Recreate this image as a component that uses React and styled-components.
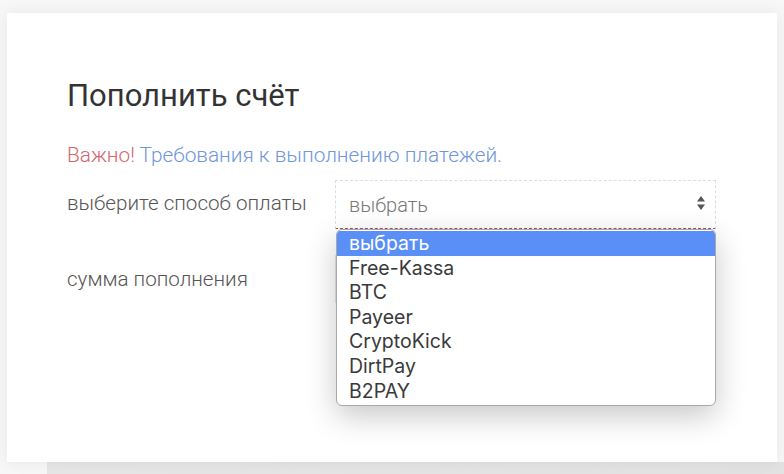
import React from 'react';
import styled, { createGlobalStyle } from 'styled-components';

const GlobalStyle = createGlobalStyle`
    html, body {
        margin: 0;
        padding: 0;
        background: #f7f7f7;
        font-family: Roboto, "Liberation Sans", sans-serif;
        overflow: hidden;
    }
`

const Page = styled.div`
    width: 784px;
    height: 474px;
    display: flex;
    flex-direction: column;
    align-items: flex-start;
    padding-top: 13px;
    box-sizing: border-box;
`

const Card = styled.div`
    margin-left: 7px;
    width: 770px;
    height: 449px;
    background: #fff;
    box-shadow: 0 0 14px rgba(0, 0, 0, 0.07);
    padding: 64px 60px 0 60px;
    box-sizing: border-box;
    position: relative;
    z-index: 1;
`

const Footer = styled.div`
    margin-left: 47px;
    width: 737px;
    height: 12px;
    background: linear-gradient(to right, #e6e6e6, #e2e2e2);
`

const Title = styled.h2`
    margin: 0;
    font-size: 31px;
    font-weight: 400;
    color: #333;
    line-height: 38px;
`

const Notice = styled.p`
    margin: 28px 0 0;
    font-size: 20.8px;
    font-weight: 300;
    line-height: 24px;
`

const Warn = styled.span`
    color: #d4666f;
`

const Link = styled.span`
    color: #6f97d9;
`

const Row = styled.div`
    display: flex;
    align-items: ${props => props.align || 'center'};
    margin-top: ${props => props.top};
    position: relative;
`

const Label = styled.div`
    width: 268px;
    font-size: 20.6px;
    font-weight: 300;
    color: #555;
    padding-top: ${props => props.pad || '0'};
`

const SelectBox = styled.div`
    width: 381px;
    height: 49px;
    border: 1px dashed #ddd;
    border-bottom-color: #a05060;
    box-sizing: border-box;
    display: flex;
    align-items: center;
    justify-content: space-between;
    padding: 0 10px 0 13px;
    font-size: 20px;
    font-weight: 300;
    color: #777;
`

const Arrows = styled.svg`
    width: 8px;
    height: 14px;
    margin-top: -4px;
`

const InputBox = styled.div`
    width: 381px;
    height: 48px;
    border: 1px solid #e4e4e4;
    box-sizing: border-box;
`

const Menu = styled.ul`
    position: absolute;
    left: 269px;
    top: 49px;
    width: 380px;
    margin: 0;
    padding: 1px 0 2px;
    list-style: none;
    background: #fff;
    border: 1px solid #a9a9a9;
    border-radius: 6px;
    box-shadow: 0 10px 30px rgba(0, 0, 0, 0.22);
    box-sizing: border-box;
    z-index: 5;
    overflow: hidden;
`

const Option = styled.li`
    height: 24.6px;
    line-height: 24.6px;
    padding-left: 12px;
    font-family: Inter, "Liberation Sans", sans-serif;
    font-size: 19.5px;
    color: ${props => (props.active ? '#fff' : '#3a3a3a')};
    background: ${props => (props.active ? '#5a8ff7' : 'transparent')};
`

const options = ['выбрать', 'Free-Kassa', 'BTC', 'Payeer', 'CryptoKick', 'DirtPay', 'B2PAY'];

const App = () => (
    <>
        <GlobalStyle />
        <Page>
            <Card>
                <Title>Пополнить счёт</Title>
                <Notice>
                    <Warn>Важно!</Warn> <Link>Требования к выполнению платежей.</Link>
                </Notice>
                <Row top="13px" align="flex-start">
                    <Label pad="11px">выберите способ оплаты</Label>
                    <SelectBox>
                        <span>выбрать</span>
                        <Arrows viewBox="0 0 8 14">
                            <path d="M4 0 L8 5.5 L0 5.5 Z" fill="#555" />
                            <path d="M4 14 L8 8.5 L0 8.5 Z" fill="#555" />
                        </Arrows>
                    </SelectBox>
                    <Menu>
                        {options.map((o, key) => (
                            <Option active={key === 0} key={key}>{o}</Option>
                        ))}
                    </Menu>
                </Row>
                <Row top="26px">
                    <Label>сумма пополнения</Label>
                    <InputBox />
                </Row>
            </Card>
            <Footer />
        </Page>
    </>
);

export default App;
